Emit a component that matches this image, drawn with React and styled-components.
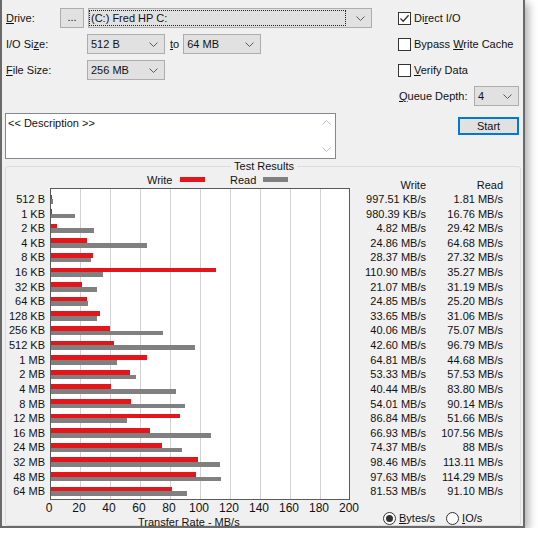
import React from "react";
import styled, { createGlobalStyle } from "styled-components";

const FONT = `"Liberation Sans", Arial, sans-serif`;
const ROW_H = 14.62;
const SCALE = 1.5;

const results = [
  ["512 B", "997.51 KB/s", "1.81 MB/s"],
  ["1 KB", "980.39 KB/s", "16.76 MB/s"],
  ["2 KB", "4.82 MB/s", "29.42 MB/s"],
  ["4 KB", "24.86 MB/s", "64.68 MB/s"],
  ["8 KB", "28.37 MB/s", "27.32 MB/s"],
  ["16 KB", "110.90 MB/s", "35.27 MB/s"],
  ["32 KB", "21.07 MB/s", "31.19 MB/s"],
  ["64 KB", "24.85 MB/s", "25.20 MB/s"],
  ["128 KB", "33.65 MB/s", "31.06 MB/s"],
  ["256 KB", "40.06 MB/s", "75.07 MB/s"],
  ["512 KB", "42.60 MB/s", "96.79 MB/s"],
  ["1 MB", "64.81 MB/s", "44.68 MB/s"],
  ["2 MB", "53.33 MB/s", "57.53 MB/s"],
  ["4 MB", "40.44 MB/s", "83.80 MB/s"],
  ["8 MB", "54.01 MB/s", "90.14 MB/s"],
  ["12 MB", "86.84 MB/s", "51.66 MB/s"],
  ["16 MB", "66.93 MB/s", "107.56 MB/s"],
  ["24 MB", "74.37 MB/s", "88 MB/s"],
  ["32 MB", "98.46 MB/s", "113.11 MB/s"],
  ["48 MB", "97.63 MB/s", "114.29 MB/s"],
  ["64 MB", "81.53 MB/s", "91.10 MB/s"],
];

const ticks = [0, 20, 40, 60, 80, 100, 120, 140, 160, 180, 200];

const toMB = (s) => {
  const n = parseFloat(s);
  return s.includes("KB") ? n / 1024 : n;
};

const GlobalStyle = createGlobalStyle`
  html, body {
    margin: 0;
    padding: 0;
    background: #fff;
  }
  body {
    font-family: ${FONT};
    font-size: 11px;
    color: #111;
  }
  u {
    text-decoration: underline;
    text-underline-offset: 1px;
  }
`;

const Window = styled.div`
  width: 525px;
  height: 528px;
  box-sizing: border-box;
  background: #f0f0f0;
  border: 2px solid #6a6a6a;
  border-top: none;
  padding: 8px 2px 0 3px;
  box-shadow: 3px 3px 9px rgba(0, 0, 0, 0.35);
  display: flex;
  flex-direction: column;
`;

const Top = styled.div`
  display: flex;
  gap: 26px;
`;

const LeftPane = styled.div`
  width: 367px;
  display: flex;
  flex-direction: column;
`;

const RightPane = styled.div`
  width: 121px;
  display: flex;
  flex-direction: column;
`;

const FormRow = styled.div`
  display: flex;
  align-items: center;
  height: 20px;
  & + & {
    margin-top: 6px;
  }
`;

const FieldLabel = styled.span`
  width: ${(p) => p.$w}px;
  padding-left: 1px;
  box-sizing: border-box;
  flex-shrink: 0;
  white-space: nowrap;
`;

const DotsButton = styled.div`
  width: 24px;
  height: 20px;
  box-sizing: border-box;
  border: 1px solid #adadad;
  background: #e1e1e1;
  margin-right: 4px;
  display: flex;
  align-items: center;
  justify-content: center;
  line-height: 1;
  padding-bottom: 1px;
`;

const Combo = styled.div`
  width: ${(p) => p.$w}px;
  height: 20px;
  box-sizing: border-box;
  border: 1px solid #adadad;
  background: #e1e1e1;
  display: flex;
  align-items: center;
  padding: 0 6px 0 ${(p) => (p.$focus ? 0 : 3)}px;
  flex-shrink: 0;
`;

const ComboValue = styled.span`
  flex: 1;
  white-space: nowrap;
  ${(p) =>
    p.$focus &&
    `
    align-self: stretch;
    margin: 1px 10px 1px 0;
    border: 1px dotted #202020;
    padding-left: 1px;
    display: flex;
    align-items: center;
  `}
`;

const ToLabel = styled.span`
  margin: 0 4px 0 5px;
`;

const Description = styled.div`
  margin-top: 33px;
  width: 331px;
  height: 46px;
  box-sizing: border-box;
  border: 1px solid #828790;
  background: #fff;
  display: flex;
`;

const DescText = styled.div`
  flex: 1;
  padding: 2px 0 0 2px;
  line-height: 14px;
`;

const ScrollBar = styled.div`
  width: 17px;
  display: flex;
  flex-direction: column;
  justify-content: space-between;
`;

const ScrollArrow = styled.div`
  height: 17px;
  display: flex;
  align-items: center;
  justify-content: center;
`;

const CheckRow = styled.label`
  display: flex;
  align-items: center;
  height: 20px;
  margin-bottom: 6px;
  white-space: nowrap;
`;

const CheckBox = styled.span`
  width: 13px;
  height: 13px;
  box-sizing: border-box;
  border: 1px solid #333;
  background: #fff;
  margin-right: 3px;
  display: flex;
  align-items: center;
  justify-content: center;
  flex-shrink: 0;
`;

const QueueRow = styled.div`
  display: flex;
  align-items: center;
  height: 20px;
`;

const StartButton = styled.div`
  margin-top: 11px;
  align-self: flex-end;
  width: 61px;
  height: 18px;
  box-sizing: border-box;
  border: 1px solid #0078d7;
  box-shadow: inset 0 0 0 1px #0078d7;
  background: #e1e1e1;
  display: flex;
  align-items: center;
  justify-content: center;
`;

const GroupBox = styled.div`
  margin-top: 7px;
  height: 360px;
  box-sizing: border-box;
  border: 1px solid #dcdcdc;
  border-radius: 3px;
  display: flex;
  flex-direction: column;
`;

const GroupTitle = styled.div`
  width: fit-content;
  margin: -8px auto 0;
  padding: 0 3px;
  background: #f0f0f0;
  line-height: 14px;
  position: relative;
  left: 1px;
`;

const Chart = styled.div`
  margin-top: 1px;
  display: flex;
  align-items: flex-start;
`;

const SizeColumn = styled.div`
  width: 39px;
  margin-right: 5px;
  padding-top: 18px;
  display: grid;
  grid-auto-rows: ${ROW_H}px;
  text-align: right;
  line-height: ${ROW_H}px;
  white-space: nowrap;
`;

const PlotColumn = styled.div`
  width: 300px;
  display: flex;
  flex-direction: column;
`;

const Legend = styled.div`
  height: 12px;
  display: flex;
  align-items: center;
  padding-left: 97px;
  line-height: 12px;
`;

const LegendLabel = styled.span`
  width: 25px;
  text-align: right;
`;

const Swatch = styled.span`
  width: 25px;
  height: 5px;
  background: ${(p) => p.$color};
  margin: 0 25px 0 8px;
  position: relative;
  top: -1px;
`;

const Plot = styled.div`
  margin-top: 2px;
  height: 312px;
  box-sizing: border-box;
  border: 1px solid #5a5a5a;
  padding-top: 3px;
  background: #fff
    repeating-linear-gradient(to right, transparent 0 29px, #d2d2d2 29px 30px);
  display: grid;
  grid-template-rows: repeat(21, ${ROW_H}px);
`;

const BarRow = styled.div`
  display: flex;
  flex-direction: column;
  padding-top: 2.5px;
`;

const Bar = styled.div`
  height: 4.7px;
  background: ${(p) => p.$color};
`;

const TickRow = styled.div`
  margin: 2px 0 0 -16px;
  display: flex;
  line-height: 12px;
  font-size: 12px;
`;

const Tick = styled.span`
  width: 30px;
  flex-shrink: 0;
  text-align: center;
`;

const AxisTitle = styled.div`
  margin-top: 2px;
  padding-left: 88px;
  line-height: 12px;
  white-space: nowrap;
`;

const ValuesArea = styled.div`
  display: flex;
  flex-direction: column;
`;

const ValueColumns = styled.div`
  display: flex;
`;

const ValueColumn = styled.div`
  width: ${(p) => p.$w}px;
  padding-top: 4px;
  display: grid;
  grid-template-rows: 14px;
  grid-auto-rows: ${ROW_H}px;
  text-align: right;
  line-height: ${ROW_H}px;
  white-space: nowrap;
`;

const ColumnHead = styled.div`
  line-height: 14px;
`;

const RadioRow = styled.div`
  margin-top: 13px;
  padding-left: 33px;
  display: flex;
  align-items: center;
  height: 13px;
`;

const RadioItem = styled.label`
  display: flex;
  align-items: center;
  margin-right: 11px;
`;

const RadioCircle = styled.span`
  width: 13px;
  height: 13px;
  box-sizing: border-box;
  border: 1px solid #333;
  border-radius: 50%;
  background: #fff;
  margin-right: 3px;
  display: flex;
  align-items: center;
  justify-content: center;
  &::after {
    content: "";
    display: ${(p) => (p.$on ? "block" : "none")};
    width: 7px;
    height: 7px;
    border-radius: 50%;
    background: #333;
  }
`;

const Chevron = ({ up, color = "#5b5b5b" }) => (
  <svg width="9" height="5" viewBox="0 0 9 5">
    <path
      d={up ? "M0.5 4.5 L4.5 0.5 L8.5 4.5" : "M0.5 0.5 L4.5 4.5 L8.5 0.5"}
      fill="none"
      stroke={color}
      strokeWidth="1"
    />
  </svg>
);

const Check = () => (
  <svg width="11" height="11" viewBox="0 0 11 11">
    <path d="M1.5 5.5 L4.2 8.2 L9.6 2.2" fill="none" stroke="#333" strokeWidth="1.3" />
  </svg>
);

const Select = ({ w, value, focus }) => (
  <Combo $w={w} $focus={focus}>
    <ComboValue $focus={focus}>{value}</ComboValue>
    <Chevron />
  </Combo>
);

const Option = ({ checked, children }) => (
  <CheckRow>
    <CheckBox>{checked && <Check />}</CheckBox>
    <span>{children}</span>
  </CheckRow>
);

export default function App() {
  return (
    <>
      <GlobalStyle />
      <Window>
        <Top>
          <LeftPane>
            <FormRow>
              <FieldLabel $w={55}>
                <u>D</u>rive:
              </FieldLabel>
              <DotsButton>...</DotsButton>
              <Select w={284} value="(C:) Fred HP C:" focus />
            </FormRow>
            <FormRow>
              <FieldLabel $w={82}>
                I/O Si<u>z</u>e:
              </FieldLabel>
              <Select w={78} value="512 B" />
              <ToLabel>
                <u>t</u>o
              </ToLabel>
              <Select w={78} value="64 MB" />
            </FormRow>
            <FormRow>
              <FieldLabel $w={82}>
                <u>F</u>ile Size:
              </FieldLabel>
              <Select w={78} value="256 MB" />
            </FormRow>
            <Description>
              <DescText>&lt;&lt; Description &gt;&gt;</DescText>
              <ScrollBar>
                <ScrollArrow>
                  <Chevron up color="#bcbcbc" />
                </ScrollArrow>
                <ScrollArrow>
                  <Chevron color="#bcbcbc" />
                </ScrollArrow>
              </ScrollBar>
            </Description>
          </LeftPane>
          <RightPane>
            <Option checked>
              Di<u>r</u>ect I/O
            </Option>
            <Option>
              Bypass <u>W</u>rite Cache
            </Option>
            <Option>
              <u>V</u>erify Data
            </Option>
            <QueueRow>
              <FieldLabel $w={76}>
                <u>Q</u>ueue Depth:
              </FieldLabel>
              <Select w={45} value="4" />
            </QueueRow>
            <StartButton>Start</StartButton>
          </RightPane>
        </Top>

        <GroupBox>
          <GroupTitle>Test Results</GroupTitle>
          <Chart>
            <SizeColumn>
              {results.map(([size]) => (
                <span key={size}>{size}</span>
              ))}
            </SizeColumn>
            <PlotColumn>
              <Legend>
                <LegendLabel>Write</LegendLabel>
                <Swatch $color="#e3161b" />
                <LegendLabel>Read</LegendLabel>
                <Swatch $color="#808080" />
              </Legend>
              <Plot>
                {results.map(([size, w, r]) => (
                  <BarRow key={size}>
                    <Bar
                      $color="#e3161b"
                      style={{ width: Math.max(0, toMB(w) * SCALE - 1) }}
                    />
                    <Bar
                      $color="#808080"
                      style={{ width: Math.max(0, toMB(r) * SCALE - 1) }}
                    />
                  </BarRow>
                ))}
              </Plot>
              <TickRow>
                {ticks.map((t) => (
                  <Tick key={t}>{t}</Tick>
                ))}
              </TickRow>
              <AxisTitle>Transfer Rate - MB/s</AxisTitle>
            </PlotColumn>
            <ValuesArea>
              <ValueColumns>
                <ValueColumn $w={76}>
                  <ColumnHead>Write</ColumnHead>
                  {results.map(([size, w]) => (
                    <span key={size}>{w}</span>
                  ))}
                </ValueColumn>
                <ValueColumn $w={77}>
                  <ColumnHead>Read</ColumnHead>
                  {results.map(([size, , r]) => (
                    <span key={size}>{r}</span>
                  ))}
                </ValueColumn>
              </ValueColumns>
              <RadioRow>
                <RadioItem>
                  <RadioCircle $on />
                  <span>
                    <u>B</u>ytes/s
                  </span>
                </RadioItem>
                <RadioItem>
                  <RadioCircle />
                  <span>
                    <u>I</u>O/s
                  </span>
                </RadioItem>
              </RadioRow>
            </ValuesArea>
          </Chart>
        </GroupBox>
      </Window>
    </>
  );
}
